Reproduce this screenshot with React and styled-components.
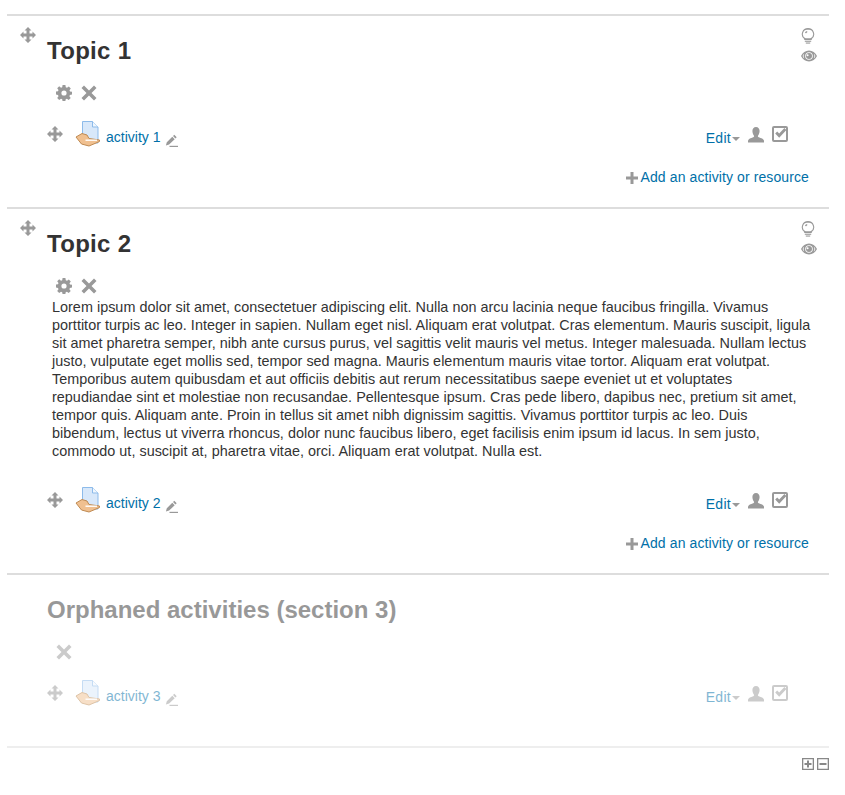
import React from 'react';
import styled, { createGlobalStyle } from 'styled-components';

const Global = createGlobalStyle`
  html, body { margin: 0; padding: 0; background: #fff; }
  body {
    font-family: "Liberation Sans", Arial, sans-serif;
    font-size: 14px;
    line-height: 18px;
    color: #333;
  }
`;

const LOREM = 'Lorem ipsum dolor sit amet, consectetuer adipiscing elit. Nulla non arcu lacinia neque faucibus fringilla. Vivamus porttitor turpis ac leo. Integer in sapien. Nullam eget nisl. Aliquam erat volutpat. Cras elementum. Mauris suscipit, ligula sit amet pharetra semper, nibh ante cursus purus, vel sagittis velit mauris vel metus. Integer malesuada. Nullam lectus justo, vulputate eget mollis sed, tempor sed magna. Mauris elementum mauris vitae tortor. Aliquam erat volutpat. Temporibus autem quibusdam et aut officiis debitis aut rerum necessitatibus saepe eveniet ut et voluptates repudiandae sint et molestiae non recusandae. Pellentesque ipsum. Cras pede libero, dapibus nec, pretium sit amet, tempor quis. Aliquam ante. Proin in tellus sit amet nibh dignissim sagittis. Vivamus porttitor turpis ac leo. Duis bibendum, lectus ut viverra rhoncus, dolor nunc faucibus libero, eget facilisis enim ipsum id lacus. In sem justo, commodo ut, suscipit at, pharetra vitae, orci. Aliquam erat volutpat. Nulla est.';

const Icon = styled.svg`
  display: block;
  flex: none;
  fill: #999;
`;

const MoveIcon = () => (
  <Icon width="16" height="16" viewBox="0 0 16 16">
    <path d="M8 0l3.500 3.500h-2v3h3v-2L16 8l-3.500 3.500v-2h-3v3h2L8 16l-3.500-3.500h2v-3h-3v2L0 8l3.500-3.500v2h3v-3h-2z" />
  </Icon>
);

const GearIcon = () => (
  <Icon width="16" height="16" viewBox="0 0 16 16">
    <path fillRule="evenodd" d="M6.600 0h2.800l.4 2.200 1.200.5L12.800 1.400l2 2-1.300 1.800.5 1.200 2 .4v2.800l-2.100.4-.5 1.200 1.300 1.800-2 2-1.800-1.300-1.200.5-.4 2.200H6.600l-.4-2.200-1.200-.5-1.800 1.300-2-2 1.300-1.800-.5-1.200L0 9.400V6.600l2-.4.500-1.200-1.300-1.800 2-2L5 2.700l1.200-.5zM8 5.400a2.600 2.600 0 1 0 0 5.200 2.600 2.600 0 0 0 0-5.200z" />
  </Icon>
);

const CrossIcon = () => (
  <Icon width="16" height="16" viewBox="0 0 16 16">
    <path d="M3 .5L8 5.500l5-5L15.500 3l-5 5 5 5-2.500 2.500-5-5-5 5L.5 13l5-5-5-5z" />
  </Icon>
);

const PencilIcon = () => (
  <Icon width="13" height="13" viewBox="0 0 13 13">
    <path d="M9.300.8l2.400 2.400-1.300 1.300L8 2.100zM7.300 2.800l2.400 2.400-5.600 5.400-3.200.9.900-3.300z" />
    <rect x="4.500" y="11.800" width="8.500" height="1.200" />
  </Icon>
);

const UserIcon = () => (
  <Icon width="16" height="16" viewBox="0 0 16 16">
    <path d="M8 0c2.300 0 3.600 1.700 3.600 4S10.500 8 10 8.800c-.3.600 0 1.200.8 1.500 2.500.9 4.700 1.500 5.200 3.400V15.500H0v-1.800c.5-1.900 2.700-2.500 5.200-3.400.8-.3 1.100-.9.800-1.500C5.500 8 4.400 6.300 4.400 4S5.700 0 8 0z" />
  </Icon>
);

const CheckIcon = () => (
  <Icon width="16" height="16" viewBox="0 0 16 16">
    <path fillRule="evenodd" d="M2 0h12a2 2 0 0 1 2 2v12a2 2 0 0 1-2 2H2a2 2 0 0 1-2-2V2a2 2 0 0 1 2-2zm0 2v12h12V2z" />
    <path d="M3.200 7.500l2-2 2 2 5.200-5.500 2 2-7.200 7.700z" />
  </Icon>
);

const BulbIcon = () => (
  <Icon width="14" height="16" viewBox="0 0 14 16">
    <path fillRule="evenodd" d="M7 0a6.200 6.200 0 0 1 3.800 11.100V12H3.200v-.9A6.200 6.200 0 0 1 7 0zm0 1.800a4.400 4.400 0 0 0-2.400 8.400h4.800A4.400 4.400 0 0 0 7 1.800z" />
    <path d="M4 5c.2-1.100 1.100-1.900 2.200-1.900v1.300c-.5 0-.9.300-1 .8z" />
    <rect x="3.800" y="12.700" width="6.400" height="1.100" />
    <rect x="4.800" y="14.500" width="4.400" height="1.100" />
  </Icon>
);

const EyeIcon = () => (
  <Icon width="16" height="12" viewBox="0 0 16 12">
    <path fillRule="evenodd" d="M8 .5c3.500 0 6.400 2.300 8 5.500-1.600 3.200-4.500 5.500-8 5.500S1.600 9.200 0 6C1.600 2.800 4.500.5 8 .5zM8 2.200a3.800 3.800 0 1 0 0 7.600 3.800 3.800 0 0 0 0-7.600zM3.200 3.400A8 8 0 0 0 1.600 6a8 8 0 0 0 1.600 2.600 5.500 5.500 0 0 1 0-5.200zm9.600 0a5.500 5.500 0 0 1 0 5.200A8 8 0 0 0 14.400 6a8 8 0 0 0-1.600-2.600z" />
    <path fillRule="evenodd" d="M8 3a3 3 0 1 1 0 6 3 3 0 0 1 0-6zM6.600 4.200a1 1 0 1 0 0 2 1 1 0 0 0 0-2z" />
  </Icon>
);

const PlusIcon = () => (
  <Icon width="12" height="12" viewBox="0 0 12 12">
    <path d="M4.500 0h3v4.500H12v3H7.500V12h-3V7.500H0v-3h4.500z" />
  </Icon>
);

const BoxIcon = ({ plus }) => (
  <Icon width="12" height="12" viewBox="0 0 12 12" style={{ fill: '#888' }}>
    <path fillRule="evenodd" d="M0 0h12v12H0zm1.300 1.300v9.400h9.400V1.300z" />
    {plus
      ? <path d="M5 2.500h2V5h2.500v2H7v2.500H5V7H2.500V5H5z" />
      : <rect x="2.500" y="5" width="7" height="2" />}
  </Icon>
);

const ResourceIcon = () => (
  <svg width="26" height="27" viewBox="0 0 26 27" style={{ display: 'block', flex: 'none' }}>
    <path d="M7.500.5h10l5.500 5.500v16H7.500z" fill="#d8e8fa" stroke="#8dbbea" />
    <path d="M17.500.5V6H23" fill="#f0f7fe" stroke="#8dbbea" />
    <path d="M1 16L7 12.500 12 14l2 3.500 10.500 1.500v1.500L14 25l-7.500-2z" fill="#f0c090" stroke="#bf8a52" />
    <path d="M10.500 19.200h11.500" stroke="#fff" strokeWidth="1.400" />
  </svg>
);

const Page = styled.div`
  width: 822px;
  margin: 14px 0 0 7px;
`;

const Section = styled.section`
  display: flex;
  border-top: 2px solid #ddd;
  height: ${p => p.$height}px;
  box-sizing: border-box;
`;

const SectionLeft = styled.div`
  flex: none;
  width: 40px;
  padding: 11px 0 0 13px;
  box-sizing: border-box;
`;

const SectionBody = styled.div`
  flex: 1;
  min-width: 0;
  opacity: ${p => (p.$hidden ? 0.5 : 1)};
`;

const SectionRight = styled.div`
  flex: none;
  width: 28px;
  padding-top: 12px;
  display: flex;
  flex-direction: column;
  align-items: flex-start;
  gap: 6px;
`;

const Heading = styled.h3`
  margin: 0;
  padding-top: 22px;
  font-size: 24px;
  line-height: 26px;
  font-weight: 700;
  color: #333;
  letter-spacing: ${p => (p.$muted ? 0 : 0.3)}px;
`;

const SectionTools = styled.div`
  display: flex;
  gap: 9px;
  padding: 21px 0 0 9px;
`;

const Summary = styled.div`
  padding: 4px 0 0 5px;
  width: 763px;
  margin-bottom: 27px;
  font-size: 14.4px;
  letter-spacing: 0.02px;
`;

const ActivityRow = styled.div`
  display: flex;
  align-items: flex-start;
  margin-top: ${p => p.$top}px;
  height: 28px;
`;

const Handle = styled.div`
  width: 28px;
  padding-top: 5px;
`;

const ActivityLink = styled.a`
  color: #0070a8;
  margin-left: 5px;
  padding-top: 7px;
`;

const Pencil = styled.div`
  margin: 13px 0 0 5px;
`;

const ActivityActions = styled.div`
  margin-left: auto;
  display: flex;
  align-items: flex-start;
  padding-right: 13px;
`;

const EditMenu = styled.a`
  display: flex;
  align-items: center;
  color: #0070a8;
  padding-top: 8px;
  margin-right: 8px;
  letter-spacing: 0.3px;
  &::after {
    content: "";
    margin: 1px 0 0 1px;
    border-top: 4px solid #999;
    border-left: 4px solid transparent;
    border-right: 4px solid transparent;
  }
`;

const ActionIcon = styled.div`
  margin-right: ${p => p.$gap}px;
  padding-top: ${p => p.$top}px;
`;

const AddRow = styled.div`
  display: flex;
  justify-content: flex-end;
  align-items: center;
  margin: 19px -8px 0 0;
  gap: 3px;
  color: #0070a8;
  letter-spacing: 0.1px;
`;

const AddIcon = styled.div`
  padding-top: 2px;
`;

const Footer = styled.div`
  display: flex;
  justify-content: flex-end;
  gap: 3px;
  border-top: 2px solid #eee;
  padding: 10px 0 0;
`;

function Activity({ name, top }) {
  return (
    <ActivityRow $top={top}>
      <Handle><MoveIcon /></Handle>
      <ResourceIcon />
      <ActivityLink>{name}</ActivityLink>
      <Pencil><PencilIcon /></Pencil>
      <ActivityActions>
        <EditMenu>Edit</EditMenu>
        <ActionIcon $gap={8} $top={6}><UserIcon /></ActionIcon>
        <ActionIcon $gap={0} $top={5}><CheckIcon /></ActionIcon>
      </ActivityActions>
    </ActivityRow>
  );
}

function AddActivity() {
  return (
    <AddRow>
      <AddIcon><PlusIcon /></AddIcon>
      <a>Add an activity or resource</a>
    </AddRow>
  );
}

export default function App() {
  return (
    <Page>
      <Global />
      <Section $height={193}>
        <SectionLeft><MoveIcon /></SectionLeft>
        <SectionBody>
          <Heading>Topic 1</Heading>
          <SectionTools><GearIcon /><CrossIcon /></SectionTools>
          <Activity name="activity 1" top={20} />
          <AddActivity />
        </SectionBody>
        <SectionRight><BulbIcon /><EyeIcon /></SectionRight>
      </Section>
      <Section $height={366}>
        <SectionLeft><MoveIcon /></SectionLeft>
        <SectionBody>
          <Heading>Topic 2</Heading>
          <SectionTools><GearIcon /><CrossIcon /></SectionTools>
          <Summary>{LOREM}</Summary>
          <Activity name="activity 2" top={0} />
          <AddActivity />
        </SectionBody>
        <SectionRight><BulbIcon /><EyeIcon /></SectionRight>
      </Section>
      <Section $height={173}>
        <SectionLeft />
        <SectionBody $hidden>
          <Heading $muted>Orphaned activities (section 3)</Heading>
          <SectionTools><CrossIcon /></SectionTools>
          <Activity name="activity 3" top={20} />
        </SectionBody>
        <SectionRight />
      </Section>
      <Footer><BoxIcon plus /><BoxIcon /></Footer>
    </Page>
  );
}
